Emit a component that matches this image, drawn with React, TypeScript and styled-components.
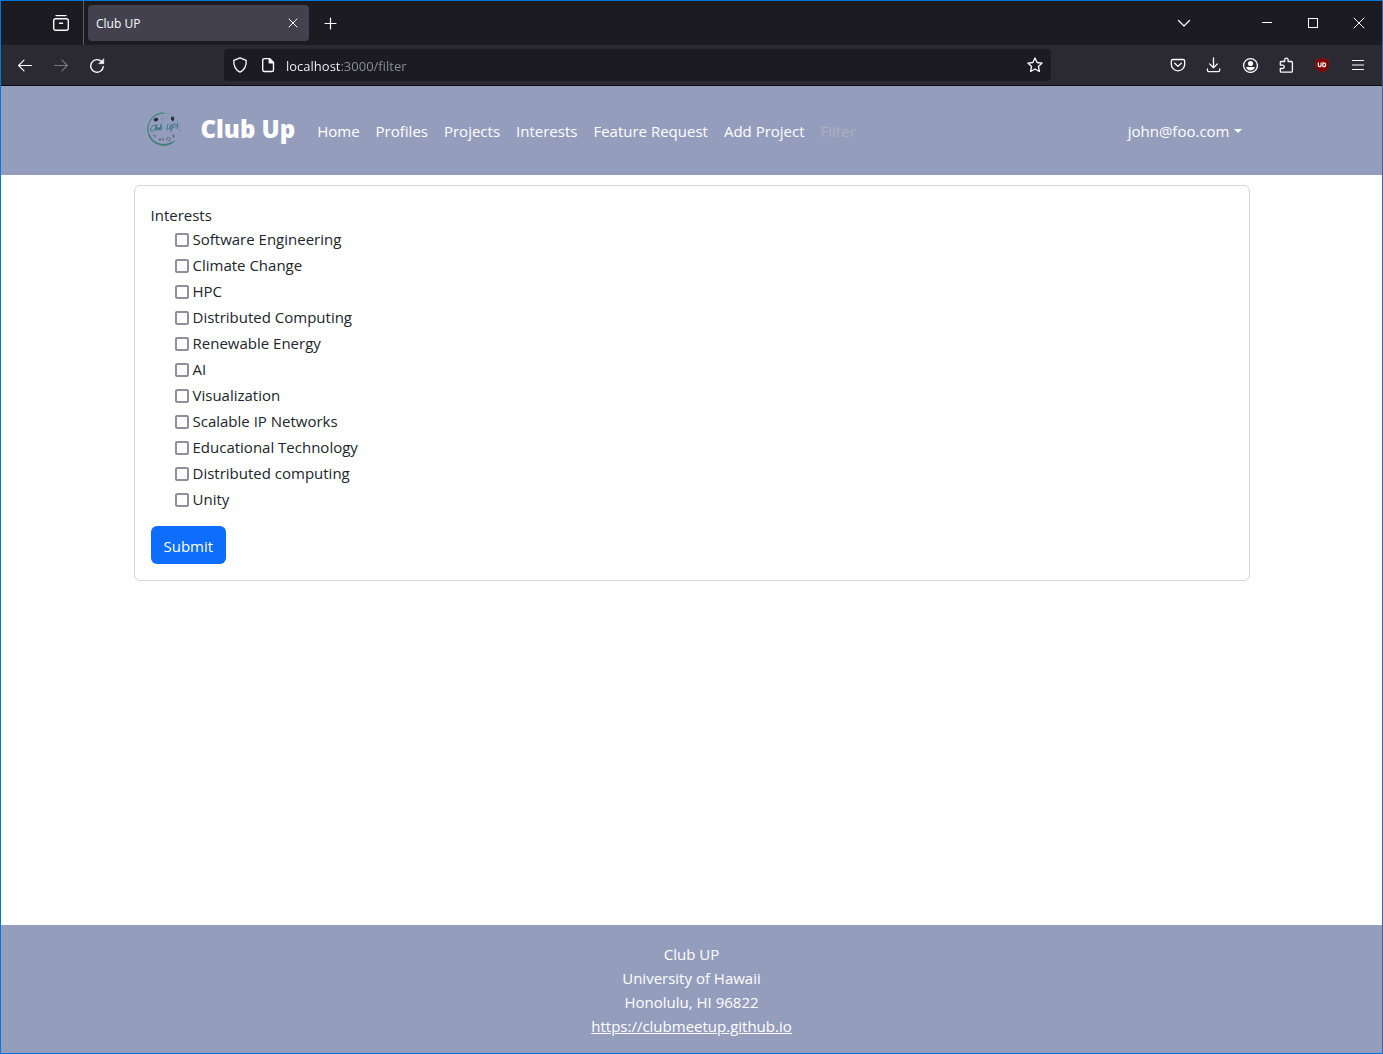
import React, { useState } from "react";
import styled, { createGlobalStyle } from "styled-components";

const GlobalStyle = createGlobalStyle`
  *, *::before, *::after { box-sizing: border-box; }
  body {
    margin: 0;
    background: #ffffff;
    color: #212529;
    font-family: "Segoe UI", "Open Sans", "Noto Sans", sans-serif;
    font-size: 15px;
    line-height: 24px;
  }
  button, input { font: inherit; color: inherit; }
`;

const Window = styled.div`
  display: flex;
  flex-direction: column;
  min-height: 100vh;
  border: 1px solid #0078d7;
`;

/* ---------- browser chrome ---------- */

const TabStrip = styled.div`
  display: flex;
  align-items: stretch;
  height: 44px;
  background: #1c1b22;
  color: #fbfbfe;
`;

const IconButton = styled.button<{ $width?: number; $dim?: boolean }>`
  display: flex;
  align-items: center;
  justify-content: center;
  flex: none;
  width: ${(p) => p.$width ?? 36}px;
  padding: 0;
  border: 0;
  background: transparent;
  color: ${(p) => (p.$dim ? "#77767e" : "#fbfbfe")};
`;

const ViewArea = styled.div`
  display: flex;
  justify-content: flex-end;
  width: 83px;
  padding-right: 4px;
  border-right: 1px solid #5b5b64;
`;

const Tab = styled.div`
  display: flex;
  align-items: center;
  justify-content: space-between;
  width: 221px;
  margin: 4px;
  padding-left: 8px;
  border-radius: 4px;
  background: #42414d;
  font-size: 12px;
`;

const TabTitle = styled.span`
  padding-top: 2px;
`;

const WindowControls = styled.div`
  display: flex;
  margin-left: auto;
`;

const Controls = styled.div`
  display: flex;
  margin-left: 42px;
`;

const Toolbar = styled.div`
  display: flex;
  align-items: stretch;
  height: 41px;
  padding: 0 6px;
  border-bottom: 1px solid #0c0c0d;
  background: #2b2a33;
`;

const AddressBar = styled.div`
  display: flex;
  align-items: center;
  flex: 1;
  margin: 4px 109px;
  padding: 0 8px;
  border-radius: 4px;
  background: #1c1b22;
  color: #fbfbfe;
`;

const SiteIcons = styled.div`
  display: flex;
  gap: 12px;
`;

const AddressInput = styled.input`
  flex: 1;
  min-width: 0;
  padding: 2px 10px 0;
  border: 0;
  outline: 0;
  background: linear-gradient(90deg, #fbfbfe 65px, #8f8f9a 65px);
  background-clip: text;
  -webkit-text-fill-color: transparent;
  font-size: 13px;
`;

/* ---------- page ---------- */

const NavBar = styled.nav`
  padding: 8px 0;
  background: #949dbc;
  color: #ffffff;
`;

const Container = styled.div`
  width: 100%;
  max-width: 1140px;
  margin: 0 auto;
  padding: 0 12px;
`;

const NavRow = styled(Container)`
  display: flex;
  align-items: center;
  min-height: 73px;
`;

const Brand = styled.a`
  display: flex;
  align-items: center;
  gap: 19px;
  margin: 0 14px 4px 12px;
  color: inherit;
  font-size: 24px;
  font-weight: 800;
  text-decoration: none;
`;

const NavList = styled.ul`
  display: flex;
  margin: 0;
  padding: 0;
  list-style: none;
`;

const NavLink = styled.a<{ $active?: boolean }>`
  display: block;
  padding: 8px;
  color: ${(p) => (p.$active ? "#abb2be" : "#ffffff")};
  text-decoration: none;
`;

const UserMenu = styled.button`
  display: flex;
  align-items: center;
  gap: 4px;
  margin-left: auto;
  padding: 8px;
  border: 0;
  background: transparent;
`;

const Caret = styled.span`
  border-top: 4px solid currentColor;
  border-left: 4px solid transparent;
  border-right: 4px solid transparent;
`;

const Main = styled.main`
  flex: 1;
  padding: 10px 0;
`;

const Card = styled.form`
  padding: 17px 16px 16px;
  border: 1px solid #d3d4d5;
  border-radius: 6px;
`;

const Fieldset = styled.fieldset`
  margin: 0 0 13px;
  padding: 0;
  border: 0;
`;

const Legend = styled.legend`
  padding: 0;
`;

const Options = styled.div`
  padding-left: 24px;
`;

const Option = styled.label`
  display: flex;
  align-items: flex-start;
  gap: 4px;
  width: fit-content;
  height: 26px;
`;

const Checkbox = styled.input`
  appearance: none;
  width: 14px;
  height: 14px;
  margin: 6px 0 0;
  border: 2px solid #8f8f9d;
  border-radius: 2px;
  background: #ffffff;
  &:checked {
    border-color: #0d6efd;
    background: #0d6efd;
  }
`;

const Submit = styled.button`
  display: block;
  padding: 8px 13px 6px;
  border: 0;
  border-radius: 6px;
  background: #0d6efd;
  color: #ffffff;
`;

const Footer = styled.footer`
  padding: 17px 0 15px;
  background: #949dbc;
  color: #ffffff;
  text-align: center;
  a { color: inherit; }
`;

/* ---------- drawings ---------- */

function Icon({ size = 16, w = 1.3, children }: { size?: number; w?: number; children: React.ReactNode }) {
  return (
    <svg width={size} height={size} viewBox={`0 0 ${size} ${size}`} fill="none" stroke="currentColor"
      strokeWidth={w} strokeLinecap="round" strokeLinejoin="round" aria-hidden="true">
      {children}
    </svg>
  );
}

const ViewIcon = () => (
  <Icon size={18} w={1.4}><path d="M4 1.600h10" /><rect x="1.700" y="4.700" width="14.600" height="11.600" rx="2" /><path d="M7.500 9.200h3" /></Icon>
);
const CloseTab = () => <Icon w={1}><path d="M4 4l8 8M12 4l-8 8" /></Icon>;
const Plus = () => <Icon w={1.2}><path d="M7.500 3v11M2 8.500h11" /></Icon>;
const Chevron = () => <Icon w={1.2}><path d="M2.500 5.500L8 11l5.500-5.500" /></Icon>;
const Minimize = () => <Icon w={1}><path d="M3 7.500h10" strokeLinecap="butt" /></Icon>;
const Maximize = () => <Icon w={1}><rect x="3.500" y="3.500" width="9" height="9" strokeLinejoin="miter" /></Icon>;
const CloseWindow = () => <Icon w={1}><path d="M3 3l10 10M13 3L3 13" /></Icon>;
const Back = () => <Icon w={1.2}><path d="M14.500 8.500H1.700M7 3.100L1.600 8.500 7 13.900" /></Icon>;
const Forward = () => <Icon w={1.2}><path d="M1.500 8.500h12.800M9 3.100L14.400 8.500 9 13.900" /></Icon>;
const Reload = () => (
  <Icon w={1.400}><path d="M14.300 9.600A6.300 6.300 0 1 1 12.600 4.600" /><path d="M14.700 2v4.700H10z" fill="currentColor" strokeWidth="0.600" /></Icon>
);
const Shield = () => <Icon w={1.3}><path d="M8 .8l6.200 2.500c.3 4.800-1.500 9.600-6.200 11.900C3.300 12.900 1.500 8.100 1.800 3.300z" /></Icon>;
const PageIcon = () => (
  <Icon w={1.4}><path d="M4.200 1.600h5.300l4 4v7.400a1.500 1.500 0 0 1-1.500 1.500H4.200A1.500 1.500 0 0 1 2.700 13V3.100a1.500 1.500 0 0 1 1.500-1.500z" /><path d="M9.300 1.800v4h4z" fill="currentColor" /></Icon>
);
const Star = () => (
  <Icon w={1.3}><path d="M8 .9l2.100 4.600 5 .6-3.700 3.400 1 5L8 12l-4.400 2.500 1-5L.9 6.100l5-.6z" /></Icon>
);
const Pocket = () => (
  <Icon w={1.3}><path d="M3 2.500h10a1.700 1.700 0 0 1 1.700 1.700V7.300a6.700 6.500 0 0 1-13.400 0V4.200A1.700 1.700 0 0 1 3 2.500z" /><path d="M4.700 6.200L8 9.400l3.300-3.200" /></Icon>
);
const Download = () => (
  <Icon w={1.3}><path d="M7.500 .8v10M3.600 6.900L7.500 10.800l3.900-3.900M1.400 11.800v1.200A1.700 1.700 0 0 0 3.100 14.700h8.900a1.700 1.700 0 0 0 1.700-1.700v-1.200" /></Icon>
);
const Account = () => (
  <Icon w={1.3}>
    <circle cx="8.500" cy="8.500" r="6.900" />
    <circle cx="8.500" cy="6.500" r="2.600" fill="currentColor" stroke="none" />
    <path d="M4.100 10.100h8.800c-.4 2.200-2.200 3.500-4.400 3.500s-4-1.300-4.400-3.500z" fill="currentColor" stroke="none" />
  </Icon>
);
const Puzzle = () => (
  <Icon w={1.3}>
    <path d="M6.700 4.500V2.800a1.700 1.700 0 0 1 3.400 0v1.700h3.300a1 1 0 0 1 1 1v8.700a1 1 0 0 1-1 1H3.300a1 1 0 0 1-1-1v-2.700h2.300a1.700 1.700 0 0 0 0-3.400H2.300V5.500a1 1 0 0 1 1-1z" />
  </Icon>
);
const Blocker = () => (
  <Icon w={1}>
    <path d="M8 .7c2.200 1.300 4.200 1.900 6.600 2v5c0 4-2.900 6.200-6.600 7.900-3.700-1.700-6.600-3.900-6.600-7.900v-5c2.400-.1 4.400-.7 6.600-2z" fill="#800000" stroke="#6b1d24" />
    <path d="M4.300 5.800v2.500a1.400 1.400 0 0 0 2.800 0V5.800M8.900 5.800v3.900h.8a1.900 1.900 0 0 0 0-3.900z" stroke="#ffffff" strokeWidth="1.200" />
  </Icon>
);
const Menu = () => <Icon w={1.2}><path d="M2.500 3.500h11M2.500 8h11M2.500 12.500h11" /></Icon>;

const Logo = () => (
  <svg width="36" height="36" viewBox="0 0 36 36" fill="none" role="img" aria-label="Club Up logo">
    <path d="M18 2A16 16 0 1 0 29 29.500" stroke="#4c8a86" strokeWidth="1.400" />
    <path d="M3 24A16 16 0 0 0 26 31.500" stroke="#3f8078" strokeWidth="1.600" />
    <path d="M18 2A16 16 0 0 1 33.500 21" stroke="#6f9a9f" strokeWidth="1" />
    <path d="M7.500 8l3-1.500 2 1.500-1 2-3 .5zM25 6l2.500-.5.8 3-1.300 2-2-2z" fill="#252b3b" />
    <path d="M14 8.500l3-2 1 2-2 1M20 7h3" stroke="#7d87a3" strokeWidth="0.700" />
    <g stroke="#387382" strokeWidth="0.900" strokeLinecap="round" strokeLinejoin="round">
      <path d="M9.500 14.500c-.5-2-4.500 1-5 4.500-.2 2.500 2.500 1.500 4-.2l2.500-5.500-1.500 6 2-3-.3 3 2.300-3-.4 3 2.500-6.500-1.600 6c2 .3 3.500-2.500 1-2.500" />
      <path d="M22 13l-1.200 5c.4 2 3.200-.5 4.400-4.500l-.8 5M27 13l-2 8M27.500 13.500c4-2 4 2.500-.5 3M31.500 12.500l-.5 5" />
    </g>
    <path d="M7 24l3 1-2 2M13 27l1 3 1-2.500 2 2 .5-3M20 28l2-2 3 2-2 2zM26 24l3 2M28 23l-1 4" stroke="#58647f" strokeWidth="0.800" />
  </svg>
);

const navLinks = ["Home", "Profiles", "Projects", "Interests", "Feature Request", "Add Project", "Filter"];

const interests = [
  "Software Engineering", "Climate Change", "HPC", "Distributed Computing", "Renewable Energy", "AI",
  "Visualization", "Scalable IP Networks", "Educational Technology", "Distributed computing", "Unity",
];

export default function App() {
  const [address, setAddress] = useState("localhost:3000/filter");
  return (
    <>
      <GlobalStyle />
      <Window>
        <TabStrip>
          <ViewArea><IconButton aria-label="View recent browsing"><ViewIcon /></IconButton></ViewArea>
          <Tab><TabTitle>Club UP</TabTitle><IconButton $width={32} aria-label="Close tab"><CloseTab /></IconButton></Tab>
          <IconButton aria-label="New tab"><Plus /></IconButton>
          <WindowControls>
            <IconButton aria-label="List all tabs"><Chevron /></IconButton>
            <Controls>
              <IconButton $width={46} aria-label="Minimize"><Minimize /></IconButton>
              <IconButton $width={46} aria-label="Maximize"><Maximize /></IconButton>
              <IconButton $width={46} aria-label="Close window"><CloseWindow /></IconButton>
            </Controls>
          </WindowControls>
        </TabStrip>
        <Toolbar>
          <IconButton aria-label="Back"><Back /></IconButton>
          <IconButton $dim aria-label="Forward"><Forward /></IconButton>
          <IconButton aria-label="Reload"><Reload /></IconButton>
          <AddressBar>
            <SiteIcons><Shield /><PageIcon /></SiteIcons>
            <AddressInput aria-label="Address" value={address} onChange={(e) => setAddress(e.target.value)} />
            <IconButton $width={16} aria-label="Bookmark this page"><Star /></IconButton>
          </AddressBar>
          <IconButton aria-label="Save to Pocket"><Pocket /></IconButton>
          <IconButton aria-label="Downloads"><Download /></IconButton>
          <IconButton aria-label="Account"><Account /></IconButton>
          <IconButton aria-label="Extensions"><Puzzle /></IconButton>
          <IconButton aria-label="Content blocker"><Blocker /></IconButton>
          <IconButton aria-label="Open menu"><Menu /></IconButton>
        </Toolbar>

        <NavBar>
          <NavRow>
            <Brand href="#"><Logo />Club Up</Brand>
            <NavList>
              {navLinks.map((name) => (
                <li key={name}><NavLink href="#" $active={name === "Filter"}>{name}</NavLink></li>
              ))}
            </NavList>
            <UserMenu type="button">john@foo.com<Caret /></UserMenu>
          </NavRow>
        </NavBar>

        <Main>
          <Container>
            <Card onSubmit={(e) => e.preventDefault()}>
              <Fieldset>
                <Legend>Interests</Legend>
                <Options>
                  {interests.map((name) => (
                    <Option key={name}><Checkbox type="checkbox" name="interests" value={name} />{name}</Option>
                  ))}
                </Options>
              </Fieldset>
              <Submit type="submit">Submit</Submit>
            </Card>
          </Container>
        </Main>

        <Footer>
          <div>Club UP</div>
          <div>University of Hawaii</div>
          <div>Honolulu, HI 96822</div>
          <a href="https://clubmeetup.github.io">https://clubmeetup.github.io</a>
        </Footer>
      </Window>
    </>
  );
}
